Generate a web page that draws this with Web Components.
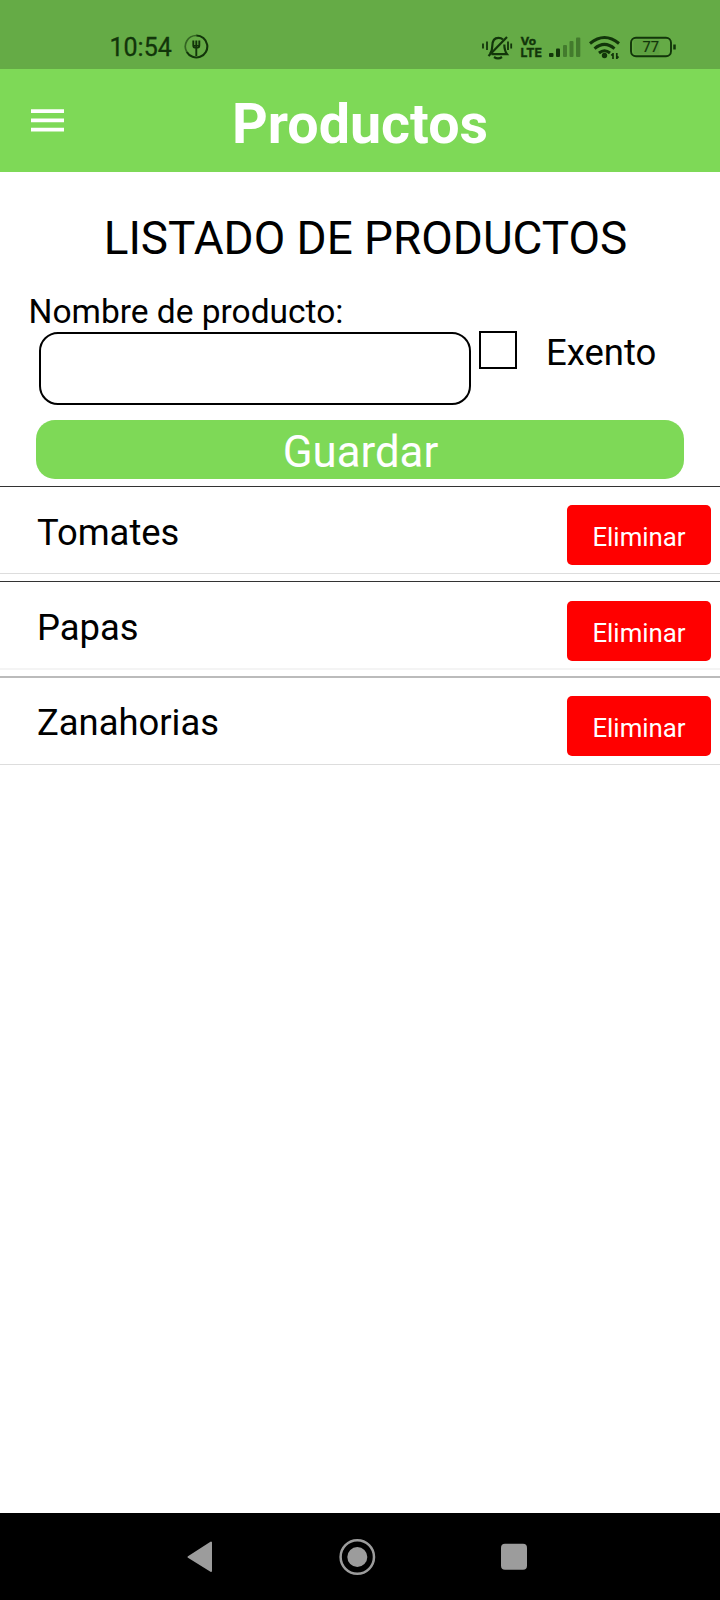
<!DOCTYPE html>
<html lang="es">
<head>
<meta charset="utf-8">
<title>Productos</title>
<style>
body{margin:0;background:#fff;font-family:Roboto,"Liberation Sans",sans-serif;color:#000}
</style>
</head>
<body>
<products-app></products-app>
<script>
const define=(name,html)=>{
  const t=document.createElement('template');
  t.innerHTML=html;
  customElements.define(name,class extends HTMLElement{
    constructor(){super();this.attachShadow({mode:'open'}).append(t.content.cloneNode(true));}
  });
};

define('status-bar',`<style>
:host{display:flex;box-sizing:border-box;height:69px;background:#65ab46;color:#12350a;align-items:flex-start}
time{font-size:25px;font-weight:400;-webkit-text-stroke:.3px #12350a;line-height:40px;margin:28px 0 0 109.500px;width:74.500px;white-space:nowrap}
svg{display:block;flex:none}
.fork{margin-top:34px}
.icons{margin:30px 0 0 271px}
text{font-family:Inter,sans-serif;font-weight:700;fill:#12350a}
.pct{font-family:Roboto,sans-serif;font-weight:400}
</style>
<time>10:54</time>
<svg class="fork" width="25" height="25" viewBox="0 0 25 25" fill="none" stroke="#12350a">
<path d="M12.300 1.500a11 11 0 1 1-9.500 16.500" stroke-width="2.100"/><path d="M2.800 18A11 11 0 0 1 12.300 1.500" stroke-width="1.700" opacity=".6"/>
<path d="M9.300 6.500v5q0 2.300 3 2.300t3-2.300v-5M12.300 6.500v15.500" stroke-width="1.900"/><path d="M9.800 11.500h5v2h-5z" stroke-width="1"/></svg>
<svg class="icons" width="200" height="34" viewBox="480 30 200 34" fill="none" stroke="#12350a">
<path d="M490 54q2.300-3 2.300-8c0-5.500 2.500-8.200 6.200-8.200q2.600 0 4.500 1.700M504.300 44.500c.1 5 .7 7 2.700 9.700h-15.500M494 57q4 2.800 8 0" stroke-width="2.200"/>
<path d="M488.500 56L507 37" stroke-width="2.200"/>
<path d="M483 43.500v5M487 41.500v8.500M508 41.500v8.500M511.200 43.500v5" stroke-width="1.800"/>
<g stroke-width=".35"><text x="520.500" y="44.800" font-size="10.700" textLength="15.500" lengthAdjust="spacingAndGlyphs">Vo</text><text x="520.500" y="57.200" font-size="11.900" textLength="21.500" lengthAdjust="spacingAndGlyphs">LTE</text></g>
<g stroke="none" fill="#12350a"><rect x="549" y="53" width="4.500" height="4" rx="1"/><rect x="556" y="48.500" width="4" height="8.500" rx="1"/><g opacity=".4"><rect x="563" y="45" width="4" height="12" rx="1"/><rect x="569.500" y="41" width="4" height="16" rx="1"/><rect x="576" y="37.500" width="4.300" height="19.500" rx="1"/></g></g>
<path d="M590 43.500q14.500-12 29 0" stroke-width="3"/><path d="M594.500 48.600q10-8.500 20 0" stroke-width="3"/><path d="M599 53q5.500-4.500 11 0" stroke-width="3"/>
<circle cx="604.500" cy="55.500" r="2.700" fill="#12350a" stroke="none"/>
<path d="M613 53v6M611.300 55.500l1.700-2M616.800 53v6M618.500 56.500l-1.700 2" stroke-width="1.700"/>
<rect x="631" y="37.700" width="40" height="18.600" rx="5" stroke-width="1.900"/>
<path d="M633.500 39.500h26v15h-26z" fill="#12350a" opacity=".08" stroke="none"/>
<path d="M674.500 44.500v5" stroke-width="2.500"/>
<text class="pct" x="642.500" y="52.300" font-size="15" textLength="16.500" lengthAdjust="spacingAndGlyphs" stroke-width=".2">77</text>
</svg>`);

define('app-header',`<style>
:host{display:grid;grid-template-columns:80px 1fr 80px;height:103px;background:#7ed957;color:#fff}
svg{display:block;margin:40px 0 0 31px}
h1{margin:7px 0 0;font-size:55.600px;line-height:96px;height:96px;font-weight:700;text-align:center}
</style>
<svg width="33" height="23" viewBox="0 0 33 23" fill="#fff"><path d="M0 .3h33v3.700H0zM0 9.500h33v3.700H0zM0 18.800h33v3.700H0z"/></svg>
<h1><slot></slot></h1>`);

define('product-form',`<style>
:host{display:block;height:314px;box-sizing:border-box;padding-top:36px}
h2{margin:0 0 24px;font-size:45.850px;line-height:60px;font-weight:400;text-align:center;padding-left:11px}
label{display:block;margin-left:28.500px;font-size:33.500px;line-height:40px}
.row{display:flex;align-items:flex-start;height:73px;padding-left:39px}
.field{box-sizing:border-box;width:432px;height:73px;border:2px solid #000;border-radius:19px}
.check{box-sizing:border-box;width:38px;height:38px;border:2px solid #000;margin:-1px 0 0 8px}
.row span{font-size:36.500px;line-height:42px;margin-left:29px}
button{display:block;box-sizing:border-box;border:0;width:648px;height:59px;margin:15px 0 0 36px;padding:4px 0 0 1px;border-radius:19px;background:#7ed957;color:#fff;font:400 43.800px/57px Roboto,sans-serif}
</style>
<h2>LISTADO DE PRODUCTOS</h2>
<label>Nombre de producto:</label>
<div class="row"><div class="field"></div><div class="check"></div><span>Exento</span></div>
<button>Guardar</button>`);

define('product-item',`<style>
:host{display:flex;box-sizing:border-box;height:88px;margin-bottom:7px;border-top:1px solid #333;border-bottom:1px solid #ddd;justify-content:space-between;padding:18px 9px 0 37px}
span{font-size:36.400px;line-height:56px}
button{box-sizing:border-box;border:0;width:144px;height:60px;border-radius:5px;background:#f00;color:#fff;padding:4px 0 0;font:400 25.800px/56px Roboto,sans-serif}
:host([second]){height:89px;border-bottom:2px solid #f4f4f4;margin-bottom:6px;padding-top:19px}
:host([third]){height:89px;border-top:2px solid #bbb;padding-top:18px}
:host([second]) span,:host([third]) span{line-height:54px}
</style>
<span><slot></slot></span><button>Eliminar</button>`);

define('nav-bar',`<style>
:host{display:flex;height:87px;background:#000;align-items:center}
svg{display:block}
</style>
<svg width="720" height="87" viewBox="0 1513 720 87" fill="#9c9c9c"><path d="M188.500 1557L211 1542.500v28.500z" stroke="#9c9c9c" stroke-width="2" stroke-linejoin="round"/><circle cx="357.300" cy="1557" r="16.700" fill="none" stroke="#9c9c9c" stroke-width="2.500"/><circle cx="357.300" cy="1557" r="10"/><rect x="501" y="1543.700" width="26" height="26" rx="4"/></svg>`);

define('products-app',`<style>
:host{display:flex;flex-direction:column;width:720px;height:1600px;background:#fff;overflow:hidden}
main{flex:1}
</style>
<status-bar></status-bar>
<app-header>Productos</app-header>
<main><product-form></product-form>
<product-item>Tomates</product-item><product-item second>Papas</product-item><product-item third>Zanahorias</product-item></main>
<nav-bar></nav-bar>`);
</script>
</body>
</html>
